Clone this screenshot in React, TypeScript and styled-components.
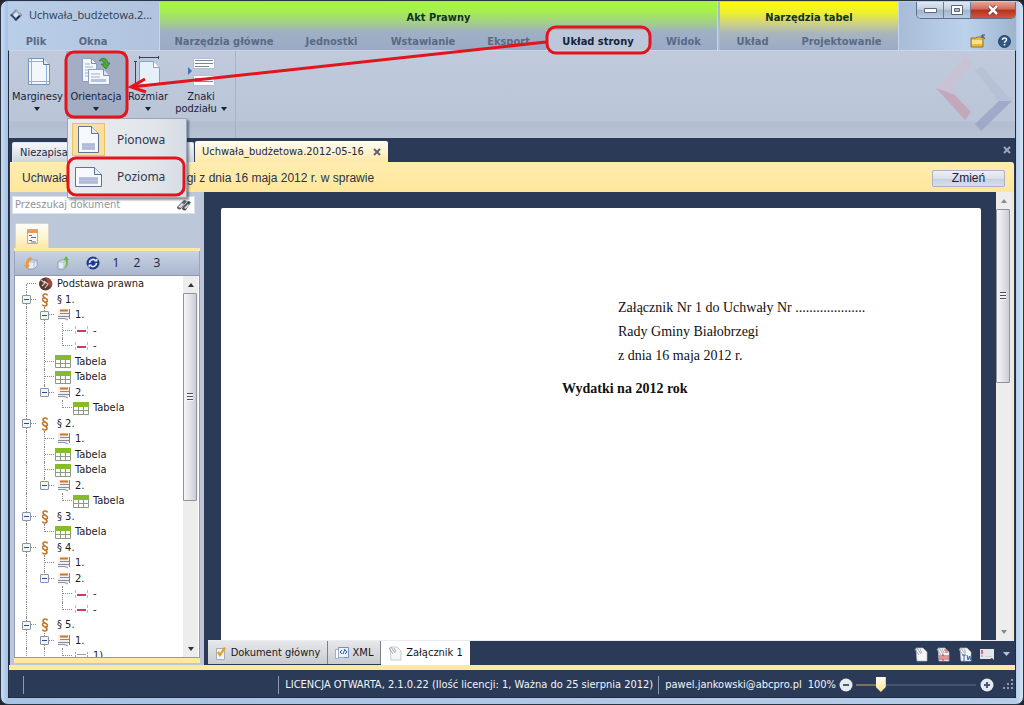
import React from 'react';
import styled, { createGlobalStyle, css } from 'styled-components';

const ui = `'DejaVu Sans Condensed', 'Liberation Sans', sans-serif`;
const segoe = `'Open Sans', 'Noto Sans', sans-serif`;
const navy = '#2b3a57';
const cream = '#ffe8a1';
const silver = '#bcc7d9';

const Global = createGlobalStyle`
  * { box-sizing: border-box; }
  html, body { margin: 0; padding: 0; background: #20262e; }
  body { font: 11px/14px ${ui}; color: #16233b; overflow: hidden; }
  button, input { font: inherit; color: inherit; margin: 0; padding: 0; border: 0; background: none; }
  svg { display: block; flex: none; }
`;

const Window = styled.div`
  position: relative;
  display: flex;
  flex-direction: column;
  height: 100vh;
  min-height: 480px;
  padding: 1px 7px 6px;
  border: 1px solid #2a3442;
  border-radius: 8px;
  background: linear-gradient(90deg, #c8dcf3 0, #a9c3e4 6px, #b7cde9 calc(100% - 7px), #d3e4f6 100%);
`;

/* ---------- title bar ---------- */
const TitleBar = styled.header`
  display: flex;
  height: 48px;
  flex: none;
  background: linear-gradient(90deg, #b9cee9 0, #aebfda 20%, #a4b7d4 87%, #bcd2ec 95%, #9fb4cc 100%);
`;

const Group = styled.section<{ $tone?: string; $apart?: boolean }>`
  display: flex;
  flex-direction: column;
  height: 48px;
  flex: none;
  margin-left: ${p => (p.$apart ? 2 : 0)}px;
  border-right: 1px solid #c5d7ee;
  background: ${p => (p.$tone ? `linear-gradient(180deg, ${p.$tone})` : 'transparent')};
`;

const GroupTitle = styled.div`
  display: flex;
  align-items: center;
  justify-content: center;
  height: 28px;
  padding-top: 4px;
  font-weight: bold;
  color: #143124;
`;

const AppTitle = styled.div`
  display: flex;
  align-items: center;
  gap: 6px;
  height: 26px;
  width: 151px;
  padding-left: 1px;
  font: 11px/16px ${segoe};
  white-space: nowrap;
  color: #2c3a50;
`;

const TabStrip = styled.nav`
  display: flex;
  height: 20px;
  margin-top: auto;
`;

const RibbonTab = styled.button<{ $w: number; $active?: boolean }>`
  width: ${p => p.$w}px;
  height: 20px;
  padding-top: 3px;
  font-weight: bold;
  color: ${p => (p.$active ? '#15233a' : '#596a84')};
  white-space: nowrap;
  ${p => p.$active && css`background: #bcc7da;`}
`;

const TitleRight = styled.div`
  display: flex;
  flex-direction: column;
  align-items: flex-end;
  justify-content: space-between;
  flex: 1;
`;

const Controls = styled.div`
  display: flex;
  height: 17px;
  border: 1px solid #5f7088;
  border-top: 0;
  border-radius: 0 0 5px 5px;
  overflow: hidden;
`;

const Control = styled.button<{ $close?: boolean }>`
  display: flex;
  align-items: center;
  justify-content: center;
  width: ${p => (p.$close ? 44 : 27)}px;
  border-right: ${p => (p.$close ? 0 : 1)}px solid #6d7f98;
  background: ${p =>
    p.$close
      ? 'linear-gradient(180deg, #e3a296 0, #d06a5a 45%, #b5301d 50%, #d0573c 100%)'
      : 'linear-gradient(180deg, #dfe8f3 0, #c3d0e2 45%, #a3b4cb 50%, #b9cbe2 100%)'};
`;

const QuickIcons = styled.div`
  display: flex;
  align-items: center;
  gap: 12px;
  padding: 0 5px 2px 0;
  button { display: block; }
`;

/* ---------- client area ---------- */
const Client = styled.div`
  display: flex;
  flex-direction: column;
  flex: 1;
  min-height: 0;
  border: 1px solid #1f2c45;
  border-top-color: #cbd5e4;
  background: ${navy};
`;

const Ribbon = styled.div`
  display: flex;
  justify-content: space-between;
  height: 87px;
  flex: none;
  background: linear-gradient(180deg, #c0cadc 0, #bac5d8 70px, #b2bdd1 71px, #b8c3d6 100%);
`;

const RibbonGroup = styled.div`
  display: flex;
  width: 227px;
  border-right: 1px solid #a7b3c7;
`;

const RibbonItem = styled.div<{ $w: number }>`
  position: relative;
  flex: none;
  width: ${p => p.$w}px;
`;

const BigButton = styled.button<{ $open?: boolean }>`
  display: flex;
  flex-direction: column;
  align-items: center;
  width: 100%;
  height: 66px;
  line-height: 12px;
  padding-top: 4px;
  background: ${p => (p.$open ? '#a3aec4' : 'none')};
  white-space: nowrap;
`;

const BigLabel = styled.span`
  display: flex;
  flex-direction: column;
  align-items: center;
  margin-top: 4px;
`;

const Inline = styled.span`
  display: flex;
  align-items: center;
  gap: 4px;
`;

const Arrow = styled.span`
  width: 0;
  height: 0;
  border: 3px solid transparent;
  border-top: 4px solid #15223a;
  border-bottom: 0;
`;

const ArrowSlot = styled.span`
  display: flex;
  align-items: center;
  height: 11px;
`;

const Watermark = styled.div`
  padding: 4px 2px 0 0;
`;

const Menu = styled.div`
  position: absolute;
  z-index: 5;
  top: 67px;
  left: 1px;
  width: 120px;
  padding: 2px;
  border: 1px solid #9ba7b8;
  background: linear-gradient(90deg, #e9ecee 0, #e2e6ea 70%, #d6dce4 100%);
  box-shadow: 2px 2px 2px rgba(30, 40, 60, 0.5);
`;

const MenuItem = styled.button`
  display: flex;
  align-items: center;
  gap: 12px;
  width: 100%;
  height: 37px;
  padding-left: 2px;
  font: 12px/16px 'Noto Sans', sans-serif;
  color: #2b3850;
`;

const MenuIcon = styled.span<{ $on?: boolean }>`
  display: flex;
  align-items: center;
  justify-content: center;
  width: 33px;
  height: 33px;
  border: 1px solid ${p => (p.$on ? '#e5c365' : 'transparent')};
  background: ${p => (p.$on ? '#fbdf9b' : 'transparent')};
`;

/* ---------- documents ---------- */
const DocTabs = styled.div`
  display: flex;
  align-items: flex-end;
  gap: 1px;
  height: 24px;
  flex: none;
  padding: 0 4px 0 3px;
`;

const DocTab = styled.button<{ $active?: boolean; $w: number }>`
  display: flex;
  align-items: center;
  justify-content: space-between;
  width: ${p => p.$w}px;
  height: ${p => (p.$active ? 21 : 20)}px;
  padding: 0 7px;
  border-radius: 2px 2px 0 0;
  background: ${p =>
    p.$active ? 'linear-gradient(180deg, #fffcf2 0, #fff3cd 50%, #ffe8a6 100%)' : 'linear-gradient(180deg, #f5f7fa, #cdd4df)'};
  ${p => !p.$active && css`border: 1px solid #dfe5ee; border-bottom: 0;`}
  color: #1b2943;
`;

const CloseAll = styled.button`
  margin: 0 0 8px auto;
`;

const InfoBar = styled.div`
  display: flex;
  align-items: center;
  height: 30px;
  flex: none;
  margin: 0 1px;
  padding: 2px 9px 0 12px;
  border-radius: 0 3px 0 0;
  background: linear-gradient(180deg, #ffedb0, #ffe69a);
  font: 12px/14px 'Liberation Sans', sans-serif;
  color: #2b3348;
  white-space: nowrap;
`;

const InfoLead = styled.span`
  width: 158px;
`;

const ChangeButton = styled.button`
  width: 73px;
  height: 17px;
  margin-left: auto;
  border: 1px solid #aab1c4;
  border-radius: 2px;
  background: linear-gradient(180deg, #eef0f6 0, #d9deea 50%, #c6cede 51%, #d8deea 100%);
  color: #1a2236;
`;

const Body = styled.main`
  display: flex;
  flex: 1;
  min-height: 0;
  margin: 0 1px;
`;

const Side = styled.aside`
  display: flex;
  flex-direction: column;
  width: 194px;
  flex: none;
  padding: 4px 4px 2px 4px;
  background: ${silver};
`;

const Search = styled.label`
  display: flex;
  align-items: center;
  width: 183px;
  height: 18px;
  margin-left: -2px;
  padding: 0 2px;
  flex: none;
  border: 1px solid #dbe1ea;
  background: #fff;
  input { flex: 1; min-width: 0; outline: 0; }
  input::placeholder { color: #8f96a0; opacity: 1; }
`;

const SideTab = styled.button`
  display: flex;
  align-items: center;
  justify-content: center;
  flex: none;
  width: 34px;
  height: 25px;
  margin: 9px 0 0 1px;
  border: 1px solid #d8d6cc;
  border-bottom: 0;
  border-radius: 2px 2px 0 0;
  background: linear-gradient(180deg, #fffdf8 0, #fff5d6 50%, #ffe8a6 100%);
`;

const CreamLine = styled.div<{ $h: number }>`
  height: ${p => p.$h}px;
  flex: none;
  background: ${cream};
`;

const SideTools = styled.div`
  display: flex;
  align-items: center;
  height: 24px;
  flex: none;
  padding-left: 7px;
  background: linear-gradient(180deg, #c9d3e3, #a9b6cd);
  border: 1px solid #98a5bb;
  border-width: 0 1px;
  font: 12px/16px ${segoe};
`;

const ToolButton = styled.button<{ $w: number }>`
  display: flex;
  align-items: center;
  justify-content: center;
  width: ${p => p.$w}px;
  height: 22px;
`;

const TreeBox = styled.div`
  display: flex;
  flex: 1;
  min-height: 0;
  padding-right: 1px;
  border: 1px solid #8d99ad;
  background: #fff;
`;

const Tree = styled.div`
  flex: 1;
  min-width: 0;
  overflow: hidden;
  padding-left: 3px;
  color: #1b1b1f;
`;

const Row = styled.div`
  display: flex;
  align-items: center;
  height: 15px;
  white-space: nowrap;
  &:nth-child(odd) { height: 16px; }
`;

const Guide = styled.span<{ $kind: string }>`
  position: relative;
  display: flex;
  align-items: center;
  justify-content: center;
  width: 18px;
  align-self: stretch;
  flex: none;
  &::before {
    content: '';
    position: absolute;
    left: 8px;
    top: ${p => (p.$kind === 'f' ? '50%' : '0')};
    bottom: ${p => ('le'.includes(p.$kind) ? '50%' : '0')};
    border-left: ${p => (p.$kind === ' ' ? '0' : '1px dotted #8a8a8a')};
  }
  &::after {
    content: '';
    position: absolute;
    left: 9px;
    right: 0;
    top: 7px;
    border-top: ${p => (' v'.includes(p.$kind) ? '0' : '1px dotted #8a8a8a')};
  }
`;

const Toggle = styled.button`
  position: relative;
  z-index: 1;
  width: 9px;
  height: 9px;
  margin-right: 1px;
  border: 1px solid #8a94a6;
  border-radius: 1px;
  background: linear-gradient(#2b4a90, #2b4a90) center / 5px 1px no-repeat #f4f5f7;
`;

const NodeIcon = styled.span`
  display: flex;
  justify-content: center;
  width: 18px;
  margin-right: 3px;
  flex: none;
`;

const Scroll = styled.div`
  display: flex;
  flex-direction: column;
  align-items: center;
  width: 15px;
  flex: none;
  background: #ededee;
`;

const ScrollButton = styled.button<{ $down?: boolean; $pale?: boolean }>`
  display: flex;
  align-items: center;
  justify-content: center;
  width: 15px;
  height: 17px;
  flex: none;
  &::before {
    content: '';
    border: 3px solid transparent;
    border-${p => (p.$down ? 'top' : 'bottom')}: 4px solid ${p => (p.$pale ? '#848a94' : '#2f3237')};
    border-${p => (p.$down ? 'bottom' : 'top')}: 0;
  }
`;

const Thumb = styled.div<{ $share: string }>`
  display: flex;
  align-items: center;
  justify-content: center;
  width: 14px;
  height: ${p => p.$share};
  border: 1px solid #8f949c;
  border-radius: 1px;
  background: linear-gradient(90deg, #f5f5f6 0, #e4e5e9 45%, #cbced8 100%);
  &::before {
    content: '';
    width: 6px;
    height: 8px;
    background: repeating-linear-gradient(180deg, #4b505a 0 1px, #f4f4f6 1px 3px);
  }
`;

const Track = styled.div`
  flex: 1;
  width: 100%;
  min-height: 0;
`;

const DocColumn = styled.div`
  display: flex;
  flex-direction: column;
  flex: 1;
  min-width: 0;
  margin-left: 4px;
`;

const Canvas = styled.div`
  display: flex;
  flex: 1;
  min-height: 0;
  border-right: 3px solid #f1e9cc;
  border-bottom: 1px solid #e9edf2;
`;

const PageArea = styled.div`
  display: flex;
  flex: 1;
  min-width: 0;
  padding: 16px 15px 0 13px;
`;

const Page = styled.article`
  flex: 1;
  border-radius: 2px 2px 0 0;
  background: #fff;
  color: #111;
  font: 14px/24px 'Liberation Serif', serif;
  padding: 88px 0 0 397px;
  white-space: nowrap;
  overflow: hidden;
  p { margin: 0; }
  h1 { margin: 9px 0 0 -56px; font-size: 14px; line-height: 24px; }
`;

const BottomTabs = styled.div`
  display: flex;
  align-items: flex-start;
  height: 24px;
  flex: none;
`;

const BottomTab = styled.button<{ $active?: boolean; $w: number }>`
  display: flex;
  align-items: center;
  justify-content: center;
  gap: 4px;
  width: ${p => p.$w}px;
  height: ${p => (p.$active ? 24 : 23)}px;
  background: ${p => (p.$active ? '#fff' : 'linear-gradient(180deg, #e8e8ea, #c9cbd0)')};
  border-right: ${p => (p.$active ? 0 : 1)}px solid #7b808a;
  white-space: nowrap;
  color: #15171c;
`;

const ExportTools = styled.div`
  display: flex;
  align-items: center;
  gap: 8px;
  height: 24px;
  margin-left: auto;
  padding: 3px 4px 0 0;
  button { display: block; }
`;

const StatusBar = styled.footer`
  display: flex;
  align-items: center;
  justify-content: flex-end;
  height: 27px;
  flex: none;
  padding: 2px 1px 0 14px;
  color: #f2f5fa;
  white-space: nowrap;
`;

const Rule = styled.span<{ $lead?: boolean }>`
  width: 1px;
  height: 18px;
  margin-right: ${p => (p.$lead ? 'auto' : '6px')};
  background: #8c9ab2;
`;

const StatusText = styled.span<{ $gap: number }>`
  margin-right: ${p => p.$gap}px;
`;

const Zoom = styled.input`
  appearance: none;
  width: 120px;
  height: 18px;
  margin: 0 4px 0 3px;
  background: linear-gradient(90deg, #75755e 0 20%, #45546f 20% 100%) center / 100% 2px no-repeat;
  &::-webkit-slider-thumb {
    appearance: none;
    width: 10px;
    height: 15px;
    background: linear-gradient(180deg, #fffdf2, #ffe292);
    clip-path: polygon(0 0, 100% 0, 100% 67%, 50% 100%, 0 67%);
  }
`;

const ZoomButton = styled.button`
  display: block;
`;

const Annotations = styled.svg`
  position: absolute;
  z-index: 10;
  left: -1px;
  top: -1px;
  pointer-events: none;
`;

/* ---------- drawings ---------- */
const Logo = () => (
  <svg width="14" height="14" viewBox="0 0 14 14">
    <path d="M1 7 7 1l2 2-4 4-2 2z" fill="#8294b4" />
    <path d="M13 7 7 13 5 11l4-4 2-2z" fill="#1e2b4b" />
    <path d="M1 7l2-1 5 5-1 2z" fill="#3a4a70" />
    <path d="M13 7l-2 1-4-5V1z" fill="#a3b1ca" />
    <path d="M4 7 7 4l3 3-3 3z" fill="#dce7f5" />
  </svg>
);

const BigLogo = () => (
  <svg width="78" height="78" viewBox="0 0 78 78">
    <path d="M1 34 31 0l6 8-18 23-1 7z" fill="#cbc2d2" opacity=".8" />
    <path d="M1 33l19 7 16 17-6 8z" fill="#c79fb3" opacity=".8" />
    <path d="M40 15l7-3 30 34-13 1z" fill="#b2bfd5" opacity=".7" />
    <path d="M77 46 46 76l-6-7 24-23z" fill="#9ba3c6" opacity=".8" />
  </svg>
);

const Sheet = ({ w = 24, h = 28 }) => (
  <svg width={w} height={h} viewBox={`0 0 ${w} ${h}`}>
    <path d={`M1.500 1.500H${w - 8.5}L${w - 1.5} 8.500V${h - 1.5}H1.500z`} fill="#f6f9fd" stroke="#5f7492" />
    <path d={`M${w - 8.5} 1.500V8.500H${w - 1.5}`} fill="#e2eaf5" stroke="#5f7492" />
    <path d={`M5 ${h - 11}H${w - 5}V${h - 4}H5z`} fill="#bcc7df" />
    <path d={`M5 ${h - 9}H${w - 5}M5 ${h - 6}H${w - 5}`} stroke="#a3b1d0" />
  </svg>
);

const MarginsIcon = () => (
  <svg width="30" height="32" viewBox="0 0 30 32">
    <path d="M5.500 3.500h15l6 6v20h-21z" fill="#f2f7fd" stroke="#7893ba" />
    <path d="M8.500 4v25M23.500 8v21M6 6.500h15M6 26.500h20" stroke="#8fb0da" fill="none" />
    <path d="M20.500 3.500v6h6" fill="#e0eaf6" stroke="#5f7492" />
  </svg>
);

const OrientationIcon = () => (
  <svg width="30" height="32" viewBox="0 0 30 32">
    <path d="M1.500 3.500h9l5 5v18h-14z" fill="#f3f7fd" stroke="#8aa0c1" />
    <path d="M10.500 3.500v5h5" fill="none" stroke="#7790b5" />
    <path d="M4 9h5M4 12h8M4 15h8M4 18h4M4 21h4" stroke="#9db2d2" />
    <path d="M7.500 14.500h15l6 6v9h-21z" fill="#f3f7fd" stroke="#8aa0c1" />
    <path d="M22.500 14.500v6h6" fill="#dbe6f4" stroke="#7790b5" />
    <path d="M10 19h9M10 22h9" stroke="#9db2d2" />
    <path d="M10 24h15v3H10z" fill="#b4c4e0" />
    <path d="M18 6c2-4 8-4 9 2h2l-4 6-5-5h3c0-3-3-4-5-3z" fill="#4ea53a" stroke="#2a7a22" strokeWidth=".7" />
  </svg>
);

const SizeIcon = () => (
  <svg width="30" height="32" viewBox="0 0 30 32">
    <path d="M6 2.500h20M6.500 1v3M25.500 1v3M2.500 6v24M1 6.500h3M1 29.500h3" stroke="#34425b" />
    <path d="M6.500 6.500h14l6 6v17h-20z" fill="#e6f0fb" stroke="#88a2c6" />
    <path d="M20.500 6.500v6h6" fill="#fff" stroke="#88a2c6" />
  </svg>
);

const BreakIcon = () => (
  <svg width="30" height="32" viewBox="0 0 30 32">
    <path d="M7.500 3.500h21v10h-21zM7.500 20.500h21v10h-21z" fill="#fbfcfe" stroke="#b3bfd0" />
    <path d="M9 5.500h18M9 8.500h18M9 11.500h14M9 23.500h18M9 26.500h18" stroke="#7c8596" />
    <path d="M2 12l4 4-4 4z" fill="#3e74b4" />
  </svg>
);

const Cross = ({ color = '#5f6470', size = 8 }) => (
  <svg width={size} height={size} viewBox="0 0 8 8">
    <path d="M1 1l6 6M7 1 1 7" stroke={color} strokeWidth="2" />
  </svg>
);

const Folder = () => (
  <svg width="16" height="14" viewBox="0 0 16 14">
    <path d="M1 4h5l1-1h6v10H1z" fill="#e9b93d" stroke="#7d6320" strokeWidth=".8" />
    <path d="M2 6h10v4H2z" fill="#ffe08a" />
    <path d="M15 5 12 1M12 1h3M12 1v3" stroke="#3b4d6d" fill="none" />
  </svg>
);

const Help = () => (
  <svg width="13" height="13" viewBox="0 0 13 13">
    <circle cx="6.500" cy="6.500" r="6" fill="#2f5689" stroke="#24406b" />
    <path d="M4.500 5c0-2.600 4-2.600 4-.2 0 1.500-2 1.500-2 3M6.500 9v1.500" stroke="#fff" strokeWidth="1.500" fill="none" />
  </svg>
);

const Binoculars = () => (
  <svg width="16" height="12" viewBox="0 0 16 12">
    <path d="M1 8 8 1l3 1-6 8c-2 1-4 0-4-2z" fill="#5c5f63" />
    <path d="M6 9l6-7 3 1-5 8c-2 1-4 0-4-2z" fill="#4a4d52" />
    <path d="M2 8l4-4 2 1-3 4zM8 9l4-4 1 1-3 4z" fill="#d9dcdf" />
  </svg>
);

const OutlineIcon = () => (
  <svg width="13" height="15" viewBox="0 0 13 15">
    <path d="M1.500.500h10v14h-10z" fill="#fdf7ee" stroke="#c9a98a" />
    <path d="M1 1h11v3H1z" fill="#ea9a55" />
    <path d="M3 6.500h3M5 8.500h5M3 11.500h3M5 13h5" stroke="#566c9c" />
  </svg>
);

const BoxArrow = ({ color }: { color: string }) => (
  <svg width="15" height="14" viewBox="0 0 15 14">
    <path d="M4 6l3-2h6v6l-3 3H4z" fill="#e9eef6" stroke="#8392ab" strokeWidth=".8" />
    <path d="M4 6h6v7M10 6l3-2" stroke="#9daac0" strokeWidth=".8" fill="none" />
    {color === 'green' ? (
      <path d="M9 12c3-2 3-5 2.500-8H9.500L12 0l3 4h-1.500c.500 4-.500 7-4.500 8z" fill="#67b93f" />
    ) : (
      <path d="M7 1C2 2 2 6 2 9H0l3 4 3-4H4.500C4.500 6 5 4 8 3z" fill="#ef9a3a" />
    )}
  </svg>
);

const Refresh = () => (
  <svg width="14" height="14" viewBox="0 0 14 14">
    <circle cx="7" cy="7" r="6.500" fill="#1f3a8c" />
    <path d="M3.500 7a3.500 3.500 0 0 1 6-2.500M10.500 7a3.500 3.500 0 0 1-6 2.500" stroke="#e5ecfa" strokeWidth="1.700" fill="none" />
    <path d="M8 5.500h3.500V2zM6 8.500H2.500V12z" fill="#e5ecfa" />
  </svg>
);

const treeIcons: Record<string, React.ReactNode> = {
  seal: (
    <svg width="15" height="14" viewBox="0 0 15 14">
      <circle cx="7.500" cy="7" r="6.500" fill="#5a3a30" />
      <path d="M7.500.500a6.500 6.500 0 0 1 5 11z" fill="#a1473c" />
      <path d="M3 3l4 3-3 3M6 4l4 3-3 4" stroke="#d9c7b8" strokeWidth="1.200" fill="none" />
    </svg>
  ),
  par: (
    <svg width="8" height="14" viewBox="0 0 8 14">
      <path
        d="M6.500 2.500C6 .500 2 .500 2 3c0 2 4.500 2 4.500 4.500C6.500 9 4 9.500 3 8.500M1.500 11.500c.500 2 4.500 2 4.500-.500 0-2-4.500-2-4.500-4.500C1.500 5 4 4.500 5 5.500"
        stroke="#bf7426"
        strokeWidth="1.600"
        fill="none"
      />
    </svg>
  ),
  doc: (
    <svg width="13" height="12" viewBox="0 0 13 12">
      <path d="M1 0h11v10l-3 1.500L6 10l-5 1z" fill="#f1eeee" />
      <path d="M3 1.500h8" stroke="#d9751f" strokeWidth="2" />
      <path d="M3 4.500h9M1 7.500h11" stroke="#8f8a92" />
      <path d="M1 9.500h7l3 1.500" stroke="#7d96c4" fill="none" />
      <path d="M12.500 0v10" stroke="#a9736a" />
    </svg>
  ),
  dash: (
    <svg width="13" height="11" viewBox="0 0 13 11">
      <path d="M.500 1v9M12.500 1v9" stroke="#c9b3bc" strokeDasharray="3 2" />
      <path d="M2 6h9" stroke="#d03a5c" strokeWidth="2" />
    </svg>
  ),
  table: (
    <svg width="16" height="13" viewBox="0 0 16 13">
      <path d="M.500.500h15v12H.500z" fill="#fdfdf8" stroke="#8d9a86" />
      <path d="M0 0h16v5H0z" fill="#86bb2b" />
      <path d="M0 8.500h16M5.500 5v8M10.500 5v8" stroke="#8d9a86" />
    </svg>
  ),
  num: (
    <svg width="13" height="10" viewBox="0 0 13 10">
      <path d="M.500 1v9M12.500 1v9" stroke="#c98a96" strokeDasharray="2 1" />
      <path d="M2 3.500h9M2 6.500h9" stroke="#9aa0a8" />
    </svg>
  ),
};

const EditIcon = () => (
  <svg width="12" height="14" viewBox="0 0 12 14">
    <path d="M1.500 2.500h8v11h-8z" fill="#f3f5f8" stroke="#a3adbb" />
    <path d="M2 7l3 4 6-9-2-1-4 6-1-2z" fill="#e6a01f" />
  </svg>
);

const XmlIcon = () => (
  <svg width="14" height="14" viewBox="0 0 14 14">
    <path d="M3.500 1.500h10v10h-10z" fill="#eaf1fb" stroke="#6f93c6" />
    <path d="M7 4 5 6l2 2M8 8l2-5M10 4l2 2-2 2" stroke="#2c58a6" fill="none" />
    <path d="M.500 3.500h3v9h-3zM4 11.500h5" fill="#fff" stroke="#9aacc8" />
  </svg>
);

const ClipIcon = ({ label = '', color = '#c33' }) => (
  <svg width="14" height="15" viewBox="0 0 14 15">
    <path d="M2 1h7l4 4v9H3z" fill="#f5f6f8" stroke="#b0b5bf" strokeWidth=".7" />
    <path d="M1 2l4 6M3 1l4 6M6 2l2 4" stroke="#a5aab4" fill="none" />
    {label === 'r' && <path d="M4 8v5M6 8h2v5H6zM10 8v5M12 8v5M8 3h4M9 5h3" stroke={color} fill="none" />}
    {label === 'w' && <path d="M4 8h4M6 8v6M9 8l1 5 1.500-4 1 4 1-5" stroke={color} fill="none" />}
  </svg>
);

const Certificate = () => (
  <svg width="15" height="13" viewBox="0 0 15 13">
    <path d="M0 1h14v11l-2-2-2 1H0z" fill="#e3e6ea" />
    <path d="M2 2v4M2 7.500v1" stroke="#cc2f2f" strokeWidth="1.300" />
    <path d="M5 8.500h7" stroke="#cfd3d9" />
  </svg>
);

const Round = ({ plus = false }) => (
  <svg width="14" height="14" viewBox="0 0 14 14">
    <circle cx="7" cy="7" r="6.500" fill="#e6eaf1" />
    <path d={plus ? 'M4 7h6M7 4v6' : 'M4 7h6'} stroke="#4b5a73" strokeWidth="2" />
  </svg>
);

const Grip = () => (
  <svg width="11" height="11" viewBox="0 0 11 11">
    <path d="M8 0h2v2H8zM4 4h2v2H4zM8 4h2v2H8zM0 8h2v2H0zM4 8h2v2H4zM8 8h2v2H8z" fill="#8d9cb8" />
  </svg>
);

/* ---------- data ---------- */
// Each guide letter draws one indent cell: v line, t tee, l last, f first, b box, e last box.
const rows: [string, string, string][] = [
  ['f', 'seal', 'Podstawa prawna'],
  ['b', 'par', '§ 1.'],
  ['vb', 'doc', '1.'],
  ['vvt', 'dash', '-'],
  ['vvl', 'dash', '-'],
  ['vt', 'table', 'Tabela'],
  ['vt', 'table', 'Tabela'],
  ['ve', 'doc', '2.'],
  ['v l', 'table', 'Tabela'],
  ['b', 'par', '§ 2.'],
  ['vt', 'doc', '1.'],
  ['vt', 'table', 'Tabela'],
  ['vt', 'table', 'Tabela'],
  ['ve', 'doc', '2.'],
  ['v l', 'table', 'Tabela'],
  ['b', 'par', '§ 3.'],
  ['vl', 'table', 'Tabela'],
  ['b', 'par', '§ 4.'],
  ['vt', 'doc', '1.'],
  ['ve', 'doc', '2.'],
  ['v t', 'dash', '-'],
  ['v l', 'dash', '-'],
  ['b', 'par', '§ 5.'],
  ['vb', 'doc', '1.'],
  ['vvt', 'num', '1)'],
];

const aktTabs: [string, number][] = [
  ['Narzędzia główne', 128],
  ['Jednostki', 87],
  ['Wstawianie', 96],
  ['Eksport', 75],
  ['Układ strony', 104],
  ['Widok', 67],
];

export default function App() {
  return (
    <Window>
      <Global />
      <TitleBar>
        <Group>
          <AppTitle><Logo />Uchwała_budżetowa.2...</AppTitle>
          <TabStrip>
            <RibbonTab $w={56}>Plik</RibbonTab>
            <RibbonTab $w={58}>Okna</RibbonTab>
          </TabStrip>
        </Group>
        <Group $tone="#a6f83a 0, #a5ee52 20%, #a2cd8d 45%, #9fb0c4 62%, #9aaac6 100%">
          <GroupTitle>Akt Prawny</GroupTitle>
          <TabStrip>
            {aktTabs.map(([name, w]) => (
              <RibbonTab key={name} $w={w} $active={name === 'Układ strony'}>{name}</RibbonTab>
            ))}
          </TabStrip>
        </Group>
        <Group $apart $tone="#fbfb08 0, #eef02f 22%, #cdd184 45%, #a9b4bd 65%, #9aaac6 100%">
          <GroupTitle>Narzędzia tabel</GroupTitle>
          <TabStrip>
            <RibbonTab $w={65}>Układ</RibbonTab>
            <RibbonTab $w={113}>Projektowanie</RibbonTab>
          </TabStrip>
        </Group>
        <TitleRight>
          <Controls>
            <Control aria-label="Minimalizuj">
              <svg width="13" height="6" viewBox="0 0 13 6"><path d="M.500 1.500h12v4H.500z" fill="#fff" stroke="#5a6880" /></svg>
            </Control>
            <Control aria-label="Maksymalizuj">
              <svg width="12" height="10" viewBox="0 0 12 10"><path d="M.500.500h11v9H.500z" fill="#fff" stroke="#5a6880" /><path d="M3.500 3.500h5v3h-5z" fill="#a9b8ce" stroke="#5a6880" /></svg>
            </Control>
            <Control $close aria-label="Zamknij">
              <svg width="12" height="10" viewBox="0 0 12 10"><path d="M2 1l8 8M10 1 2 9" stroke="#6a3030" strokeWidth="4" /><path d="M2 1l8 8M10 1 2 9" stroke="#fff" strokeWidth="2.500" /></svg>
            </Control>
          </Controls>
          <QuickIcons>
            <button aria-label="Otwórz"><Folder /></button>
            <button aria-label="Pomoc"><Help /></button>
          </QuickIcons>
        </TitleRight>
      </TitleBar>

      <Client>
        <Ribbon>
          <RibbonGroup>
            <RibbonItem $w={57}>
              <BigButton><MarginsIcon /><BigLabel>Marginesy<ArrowSlot><Arrow /></ArrowSlot></BigLabel></BigButton>
            </RibbonItem>
            <RibbonItem $w={60}>
              <BigButton $open><OrientationIcon /><BigLabel>Orientacja<ArrowSlot><Arrow /></ArrowSlot></BigLabel></BigButton>
              <Menu role="menu">
                <MenuItem role="menuitem"><MenuIcon $on><Sheet w={23} h={29} /></MenuIcon>Pionowa</MenuItem>
                <MenuItem role="menuitem"><MenuIcon><Sheet w={29} h={22} /></MenuIcon>Pozioma</MenuItem>
              </Menu>
            </RibbonItem>
            <RibbonItem $w={44}>
              <BigButton><SizeIcon /><BigLabel>Rozmiar<ArrowSlot><Arrow /></ArrowSlot></BigLabel></BigButton>
            </RibbonItem>
            <RibbonItem $w={62}>
              <BigButton><BreakIcon /><BigLabel>Znaki<Inline>podziału<Arrow /></Inline></BigLabel></BigButton>
            </RibbonItem>
          </RibbonGroup>
          <Watermark><BigLogo /></Watermark>
        </Ribbon>

        <DocTabs>
          <DocTab $w={182}>Niezapisany<Cross /></DocTab>
          <DocTab $w={193} $active>Uchwała_budżetowa.2012-05-16<Cross /></DocTab>
          <CloseAll aria-label="Zamknij dokument"><Cross color="#9aa8c0" /></CloseAll>
        </DocTabs>

        <InfoBar>
          <InfoLead>Uchwała</InfoLead>
          <span>egi z dnia 16 maja 2012 r. w sprawie</span>
          <ChangeButton>Zmień</ChangeButton>
        </InfoBar>

        <Body>
          <Side>
            <Search>
              <input placeholder="Przeszukaj dokument" aria-label="Przeszukaj dokument" />
              <Binoculars />
            </Search>
            <SideTab aria-label="Struktura"><OutlineIcon /></SideTab>
            <CreamLine $h={3} />
            <SideTools>
              <ToolButton $w={18} aria-label="Cofnij poziom"><BoxArrow color="orange" /></ToolButton>
              <ToolButton $w={42} aria-label="Podnieś poziom"><BoxArrow color="green" /></ToolButton>
              <ToolButton $w={22} aria-label="Odśwież"><Refresh /></ToolButton>
              <ToolButton $w={24}>1</ToolButton>
              <ToolButton $w={18}>2</ToolButton>
              <ToolButton $w={22}>3</ToolButton>
            </SideTools>
            <TreeBox>
              <Tree role="tree">
                {rows.map(([guides, icon, text], i) => (
                  <Row key={i} role="treeitem">
                    {guides.split('').map((g, j) => (
                      <Guide key={j} $kind={g}>{'be'.includes(g) && <Toggle aria-label="Zwiń" />}</Guide>
                    ))}
                    <NodeIcon>{treeIcons[icon]}</NodeIcon>
                    {text}
                  </Row>
                ))}
              </Tree>
              <Scroll>
                <ScrollButton aria-label="W górę" />
                <Track><Thumb $share="60%" /></Track>
                <ScrollButton $down aria-label="W dół" />
              </Scroll>
            </TreeBox>
            <CreamLine $h={5} />
          </Side>

          <DocColumn>
            <Canvas>
              <PageArea>
                <Page>
                  <p>Załącznik Nr 1 do Uchwały Nr ....................</p>
                  <p>Rady Gminy Białobrzegi</p>
                  <p>z dnia 16 maja 2012 r.</p>
                  <h1>Wydatki na 2012 rok</h1>
                </Page>
              </PageArea>
              <Scroll>
                <ScrollButton $pale aria-label="Przewiń w górę" />
                <Track><Thumb $share="42%" /></Track>
                <ScrollButton $pale $down aria-label="Przewiń w dół" />
              </Scroll>
            </Canvas>
            <BottomTabs>
              <BottomTab $w={120}><EditIcon />Dokument główny</BottomTab>
              <BottomTab $w={53}><XmlIcon />XML</BottomTab>
              <BottomTab $w={89} $active><ClipIcon />Załącznik 1</BottomTab>
              <ExportTools>
                <button aria-label="Załącznik"><ClipIcon /></button>
                <button aria-label="RTF"><ClipIcon label="r" /></button>
                <button aria-label="Word"><ClipIcon label="w" color="#2c64ae" /></button>
                <button aria-label="Certyfikat"><Certificate /></button>
                <button aria-label="Więcej">
                  <svg width="7" height="5" viewBox="0 0 7 5"><path d="M0 0h7L3.500 4z" fill="#b8c4d8" /></svg>
                </button>
              </ExportTools>
            </BottomTabs>
          </DocColumn>
        </Body>
        <CreamLine $h={5} />

        <StatusBar>
          <Rule $lead />
          <Rule />
          <StatusText $gap={5}>LICENCJA OTWARTA, 2.1.0.22 (Ilość licencji: 1, Ważna do 25 sierpnia 2012)</StatusText>
          <Rule />
          <StatusText $gap={6}>pawel.jankowski@abcpro.pl</StatusText>
          <StatusText $gap={3}>100%</StatusText>
          <ZoomButton aria-label="Pomniejsz"><Round /></ZoomButton>
          <Zoom type="range" min={0} max={100} defaultValue={18} aria-label="Powiększenie" />
          <ZoomButton aria-label="Powiększ"><Round plus /></ZoomButton>
          <StatusText $gap={9} />
          <Grip />
        </StatusBar>
      </Client>

      <Annotations width="700" height="210" viewBox="0 0 700 210" fill="none" stroke="#e3141c" strokeWidth="3">
        <rect x="547" y="27" width="103" height="26" rx="9" />
        <rect x="66" y="52" width="61" height="65" rx="8" />
        <rect x="68" y="158" width="116" height="37" rx="8" />
        <path d="M546 42 131 87M145 79 131 87l15 5" />
      </Annotations>
    </Window>
  );
}
